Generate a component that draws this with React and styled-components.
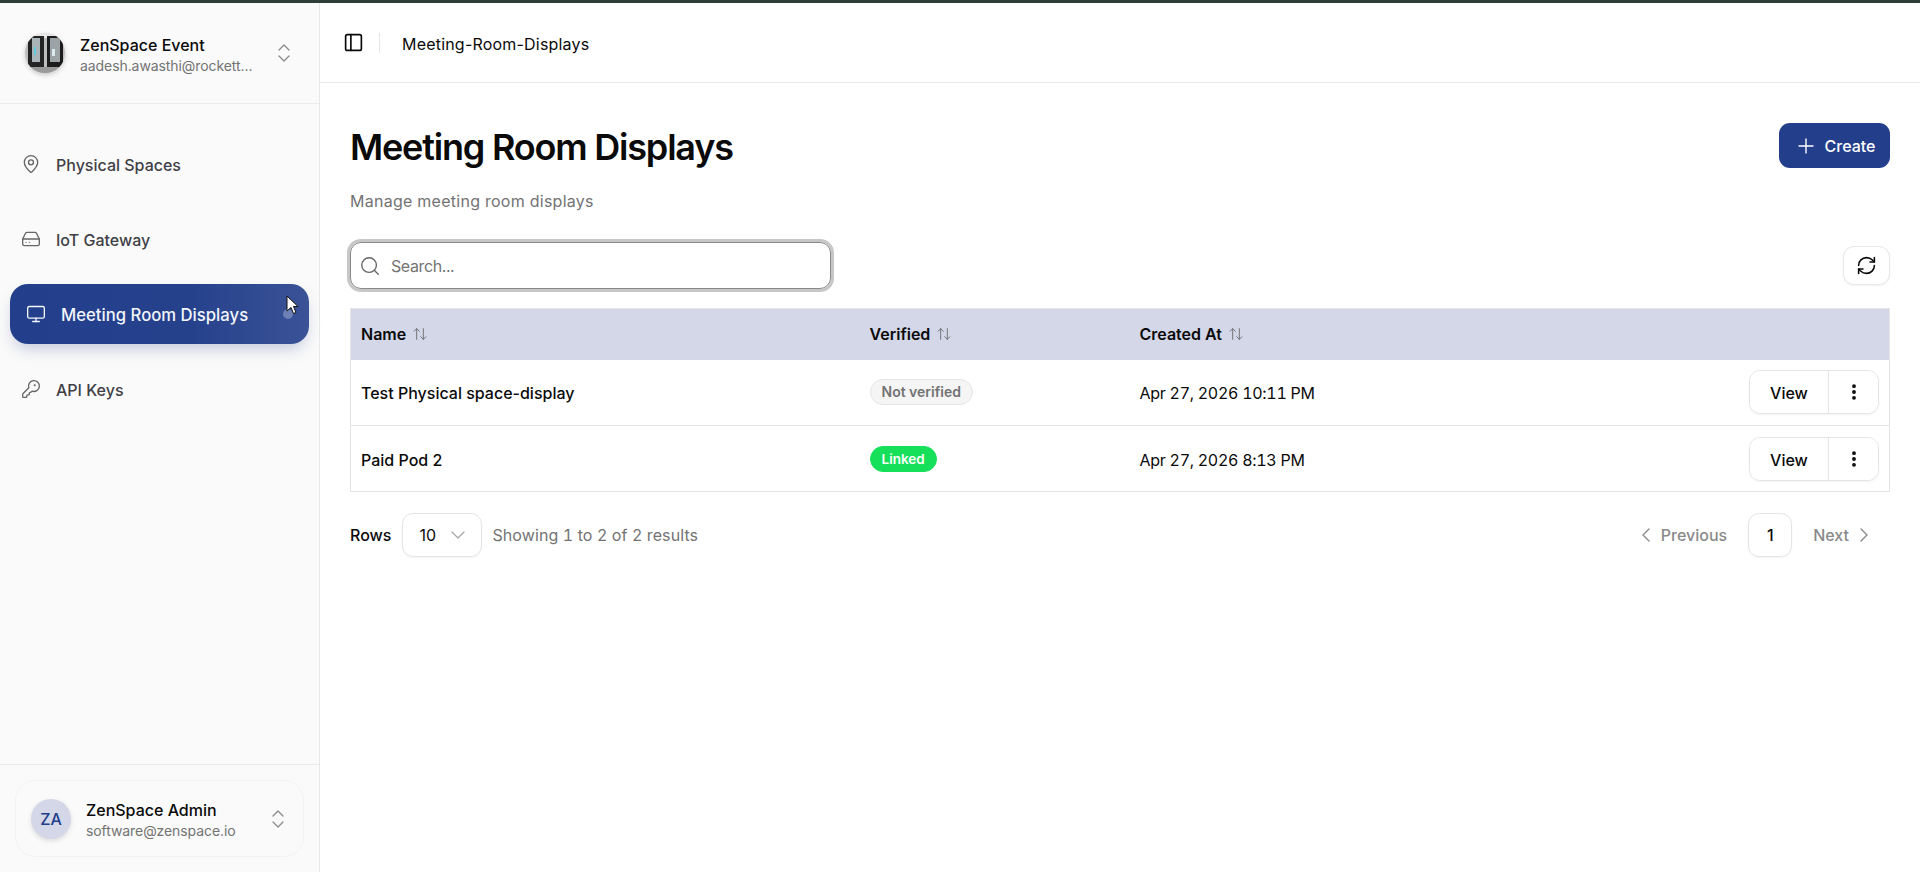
import React from 'react';
import styled, { createGlobalStyle } from 'styled-components';
import {
  ArrowUpDown,
  ChevronDown,
  ChevronLeft,
  ChevronRight,
  ChevronsUpDown,
  EllipsisVertical,
  HardDrive,
  KeyRound,
  MapPin,
  Monitor,
  PanelLeft,
  Plus,
  RefreshCw,
  Search,
} from 'lucide-react';

const GlobalStyle = createGlobalStyle`
  * { box-sizing: border-box; }
  html, body { margin: 0; height: 100%; }
  body {
    font-family: Inter, "Noto Sans", "Liberation Sans", sans-serif;
    color: #0a0a0a;
    background: #fff;
  }
`;

const Shell = styled.div`
  height: 872px;
  display: flex;
  flex-direction: column;
  overflow: hidden;
`;

const TopStrip = styled.div`
  height: 3px;
  background: #2c3d3a;
  flex: none;
`;

const Body = styled.div`
  flex: 1;
  display: flex;
  min-height: 0;
`;

const Sidebar = styled.aside`
  width: 320px;
  flex: none;
  display: flex;
  flex-direction: column;
  background: #fafafa;
  border-right: 1px solid #e8e8e8;
`;

const OrgHeader = styled.div`
  height: 101px;
  flex: none;
  display: flex;
  align-items: center;
  gap: 15px;
  padding: 0 23px 0 25px;
  border-bottom: 1px solid #ececec;
`;

const OrgLogo = styled.svg`
  width: 40px;
  height: 40px;
  flex: none;
  border-radius: 50%;
  box-shadow: 0 2px 5px rgba(0, 0, 0, 0.2);
`;

const UserText = styled.div`
  flex: 1;
  min-width: 0;
  display: flex;
  flex-direction: column;
  padding-top: 3px;
`;

const UserName = styled.div`
  font-size: 16px;
  line-height: 22px;
  font-weight: 500;
  color: #0a0a0a;
`;

const UserMail = styled.div`
  font-size: 14px;
  line-height: 20px;
  color: #737373;
  white-space: nowrap;
  letter-spacing: -0.08px;
`;

const Updown = styled(ChevronsUpDown)`
  width: 24px;
  height: 24px;
  flex: none;
  color: #8a8a8a;
  stroke-width: 1.3;
`;

const Nav = styled.nav`
  flex: 1;
  display: flex;
  flex-direction: column;
  gap: 15px;
  padding: 30px 10px 0;
`;

const NavItem = styled.a`
  position: relative;
  height: 60px;
  display: flex;
  align-items: center;
  gap: 15px;
  padding-left: ${(p) => (p.$active ? '16px' : '11px')};
  border-radius: 18px;
  font-size: ${(p) => (p.$active ? '16.7px' : '16px')};
  font-weight: 500;
  color: ${(p) => (p.$active ? '#f2f5fb' : '#3f3f46')};
  background: ${(p) =>
    p.$active ? 'linear-gradient(90deg, #233e8b 0%, #26418c 60%, #3a5397 100%)' : 'transparent'};
  box-shadow: ${(p) => (p.$active ? '0 8px 16px -4px rgba(35, 62, 139, 0.28)' : 'none')};

  svg {
    width: 20px;
    height: 20px;
    flex: none;
    color: ${(p) => (p.$active ? '#f2f5fb' : '#666')};
    stroke-width: 1.6;
  }
`;

const NavLabel = styled.span`
  padding-top: 2px;
`;

const HoverDot = styled.span`
  position: absolute;
  right: 16px;
  top: 25px;
  width: 10px;
  height: 10px;
  border-radius: 50%;
  background: #6d80b5;
`;

const Pointer = styled.svg`
  position: absolute;
  right: 10px;
  top: 11px;
  width: 13px !important;
  height: 20px !important;
`;

const SidebarFoot = styled.div`
  flex: none;
  height: 108px;
  padding: 15px;
  border-top: 1px solid #ececec;
`;

const UserCard = styled.div`
  height: 77px;
  display: flex;
  align-items: center;
  gap: 15px;
  padding: 0 13px 0 15px;
  border: 1px solid #f3f3f3;
  border-radius: 20px;
`;

const Avatar = styled.div`
  width: 40px;
  height: 40px;
  flex: none;
  border-radius: 50%;
  display: flex;
  align-items: center;
  justify-content: center;
  background: #d3d7e8;
  color: #233e8b;
  font-size: 16px;
  font-weight: 500;
  box-shadow: 0 2px 5px rgba(0, 0, 0, 0.12);
`;

const Main = styled.main`
  flex: 1;
  min-width: 0;
  display: flex;
  flex-direction: column;
`;

const TopBar = styled.header`
  height: 80px;
  flex: none;
  display: flex;
  align-items: center;
  padding-left: 23px;
  border-bottom: 1px solid #e8e8e8;
  font-size: 16px;
  color: #0a0a0a;
`;

const BarDivider = styled.span`
  width: 1px;
  height: 20px;
  margin: 0 22px 0 15px;
  background: #e5e5e5;
`;

const Crumb = styled.span`
  padding-top: 2px;
  letter-spacing: 0.2px;
`;

const Content = styled.div`
  padding: 37px 30px 0 30px;
`;

const HeadRow = styled.div`
  display: flex;
  justify-content: space-between;
  align-items: flex-start;
`;

const Title = styled.h1`
  margin: 3px 0 0;
  font-size: 36px;
  line-height: 48px;
  font-weight: 600;
  letter-spacing: -1.2px;
`;

const Subtitle = styled.p`
  margin: 18px 0 0;
  font-size: 16px;
  line-height: 24px;
  color: #737373;
  letter-spacing: 0.26px;
`;

const CreateButton = styled.button`
  height: 45px;
  width: 111px;
  margin-top: 3px;
  display: flex;
  align-items: center;
  justify-content: center;
  gap: 7px;
  border: 0;
  border-radius: 11px;
  background: #233e8b;
  color: #fff;
  font: 500 16px Inter, sans-serif;
`;

const ToolRow = styled.div`
  margin-top: 29px;
  display: flex;
  justify-content: space-between;
  align-items: center;
`;

const SearchBox = styled.div`
  width: 481px;
  height: 47px;
  display: flex;
  align-items: center;
  gap: 10px;
  padding: 0 8px;
  border: 1px solid #8a8a8a;
  border-radius: 11px;
  box-shadow: 0 0 0 3px #c7c7c7;
  font-size: 16px;
  color: #737373;
  letter-spacing: -0.4px;
`;

const IconSquare = styled.button`
  width: 47px;
  height: 39px;
  display: flex;
  align-items: center;
  justify-content: center;
  background: #fff;
  border: 1px solid #e8e8e8;
  border-radius: 11px;
  box-shadow: 0 1px 2px rgba(0, 0, 0, 0.05);
  color: #0a0a0a;
`;

const Table = styled.table`
  width: 1540px;
  margin: 19px 0 0;
  border-collapse: collapse;
  table-layout: fixed;
  font-size: 16px;
  border: 1px solid #e5e5e5;
`;

const Th = styled.th`
  height: 51px;
  padding: 0 10px;
  text-align: left;
  background: #d3d7e8;
  font-weight: 600;
  font-size: 16px;
`;

const SortWrap = styled.span`
  display: inline-flex;
  align-items: center;
  gap: 6px;

  svg {
    width: 16px;
    height: 16px;
    color: #666;
    stroke-width: 1.3;
  }
`;

const Td = styled.td`
  height: 66px;
  padding: ${(p) => (p.$text ? '2px 10px 0' : '0 10px')};
  border-bottom: 1px solid #e5e5e5;
  font-weight: ${(p) => (p.$strong ? 500 : 400)};
  text-align: ${(p) => (p.$right ? 'right' : 'left')};
`;

const DateText = styled.span`
  font-variant-numeric: tabular-nums;
  letter-spacing: -0.28px;
`;

const Badge = styled.span`
  display: inline-block;
  padding: 0 11px;
  height: 26px;
  line-height: 24px;
  border-radius: 13px;
  font-size: ${(p) => (p.$linked ? '13.5px' : '14px')};
  font-weight: 600;
  border: 1px solid ${(p) => (p.$linked ? '#16e05a' : '#e5e5e5')};
  background: ${(p) => (p.$linked ? '#16e05a' : '#f5f5f5')};
  color: ${(p) => (p.$linked ? '#fff' : '#737373')};
`;

const ActionGroup = styled.div`
  display: inline-flex;
  height: 44px;
  border: 1px solid #e5e5e5;
  border-radius: 11px;
  box-shadow: 0 1px 2px rgba(0, 0, 0, 0.05);
  overflow: hidden;
  vertical-align: middle;
`;

const ActionButton = styled.button`
  width: ${(p) => (p.$icon ? '50px' : '78px')};
  padding: ${(p) => (p.$icon ? '0' : '2px 0 0')};
  border: 0;
  border-left: ${(p) => (p.$icon ? '1px solid #e5e5e5' : '0')};
  background: #fff;
  display: flex;
  align-items: center;
  justify-content: center;
  color: #0a0a0a;
  font: 500 16px Inter, sans-serif;
`;

const Pager = styled.div`
  margin-top: 21px;
  height: 44px;
  display: flex;
  align-items: center;
  justify-content: space-between;
`;

const PagerSide = styled.div`
  display: flex;
  align-items: center;
  padding-right: ${(p) => (p.$end ? '14px' : '0')};
`;

const RowsLabel = styled.span`
  font-size: 16px;
  font-weight: 500;
`;

const RowsSelect = styled.div`
  width: 80px;
  height: 44px;
  margin: 0 10px 0 11px;
  padding: 0 11px 0 16px;
  display: flex;
  align-items: center;
  justify-content: space-between;
  border: 1px solid #e5e5e5;
  border-radius: 11px;
  box-shadow: 0 1px 2px rgba(0, 0, 0, 0.05);
  font-size: 16px;

  svg {
    width: 24px;
    height: 24px;
    color: #a3a3a3;
    stroke-width: 1.2;
  }
`;

const Summary = styled.span`
  font-size: 16px;
  color: #737373;
  font-variant-numeric: tabular-nums;
  letter-spacing: 0.1px;
`;

const PageLink = styled.span`
  display: flex;
  align-items: center;
  gap: 3px;
  color: #8a8a8a;
  font-size: 16px;
  font-weight: 500;

  svg {
    width: 24px;
    height: 24px;
    stroke-width: 1.4;
  }
`;

const PageNumber = styled.div`
  width: 44px;
  height: 44px;
  margin: 0 21px;
  display: flex;
  align-items: center;
  justify-content: center;
  border: 1px solid #e5e5e5;
  border-radius: 11px;
  box-shadow: 0 1px 2px rgba(0, 0, 0, 0.05);
  font-size: 16px;
  font-weight: 500;
`;

const rows = [
  { name: 'Test Physical space-display', linked: false, created: 'Apr 27, 2026 10:11 PM' },
  { name: 'Paid Pod 2', linked: true, created: 'Apr 27, 2026 8:13 PM' },
];

function SortHead({ children }) {
  return (
    <SortWrap>
      {children}
      <ArrowUpDown />
    </SortWrap>
  );
}

function Logo() {
  return (
    <OrgLogo viewBox="0 0 40 40">
      <rect width="40" height="40" fill="#bdbdbd" />
      <rect width="40" height="5" fill="#e8e8e8" />
      <rect x="3" y="3" width="16" height="31" fill="#242424" />
      <rect x="22" y="3" width="16" height="31" fill="#1c1c1c" />
      <rect x="7" y="5" width="8" height="24" fill="#aab3b6" />
      <rect x="25" y="5" width="10" height="24" fill="#9ca3a6" />
      <rect x="9" y="14" width="2" height="8" fill="#5fc9df" />
      <rect x="27" y="16" width="3" height="7" fill="#dce9ee" />
      <path d="M0 34h40v6H0z" fill="#9a9a9a" />
    </OrgLogo>
  );
}

export default function App() {
  return (
    <>
      <GlobalStyle />
      <Shell>
        <TopStrip />
        <Body>
          <Sidebar>
            <OrgHeader>
              <Logo />
              <UserText>
                <UserName>ZenSpace Event</UserName>
                <UserMail>aadesh.awasthi@rockett...</UserMail>
              </UserText>
              <Updown />
            </OrgHeader>
            <Nav>
              <NavItem>
                <MapPin />
                <NavLabel>Physical Spaces</NavLabel>
              </NavItem>
              <NavItem>
                <HardDrive />
                <NavLabel>IoT Gateway</NavLabel>
              </NavItem>
              <NavItem $active>
                <Monitor />
                <NavLabel>Meeting Room Displays</NavLabel>
                <HoverDot />
                <Pointer viewBox="0 0 13 20">
                  <path d="M1 1v15l4-3.5 2.5 6 2.5-1-2.5-6H12z" fill="#fff" stroke="#111" strokeWidth="1" />
                </Pointer>
              </NavItem>
              <NavItem>
                <KeyRound />
                <NavLabel>API Keys</NavLabel>
              </NavItem>
            </Nav>
            <SidebarFoot>
              <UserCard>
                <Avatar>ZA</Avatar>
                <UserText>
                  <UserName>ZenSpace Admin</UserName>
                  <UserMail>software@zenspace.io</UserMail>
                </UserText>
                <Updown />
              </UserCard>
            </SidebarFoot>
          </Sidebar>
          <Main>
            <TopBar>
              <PanelLeft size={21} strokeWidth={1.9} />
              <BarDivider />
              <Crumb>Meeting-Room-Displays</Crumb>
            </TopBar>
            <Content>
              <HeadRow>
                <div>
                  <Title>Meeting Room Displays</Title>
                  <Subtitle>Manage meeting room displays</Subtitle>
                </div>
                <CreateButton>
                  <Plus size={24} strokeWidth={1.4} />
                  Create
                </CreateButton>
              </HeadRow>
              <ToolRow>
                <SearchBox>
                  <Search size={22} color="#666" strokeWidth={1.5} />
                  Search...
                </SearchBox>
                <IconSquare>
                  <RefreshCw size={21} strokeWidth={1.8} />
                </IconSquare>
              </ToolRow>
              <Table>
                <colgroup>
                  <col style={{ width: 509 }} />
                  <col style={{ width: 270 }} />
                  <col style={{ width: 400 }} />
                  <col />
                </colgroup>
                <thead>
                  <tr>
                    <Th><SortHead>Name</SortHead></Th>
                    <Th><SortHead>Verified</SortHead></Th>
                    <Th><SortHead>Created At</SortHead></Th>
                    <Th />
                  </tr>
                </thead>
                <tbody>
                  {rows.map((row) => (
                    <tr key={row.name}>
                      <Td $strong $text>{row.name}</Td>
                      <Td>
                        <Badge $linked={row.linked}>{row.linked ? 'Linked' : 'Not verified'}</Badge>
                      </Td>
                      <Td $text><DateText>{row.created}</DateText></Td>
                      <Td $right>
                        <ActionGroup>
                          <ActionButton>View</ActionButton>
                          <ActionButton $icon>
                            <EllipsisVertical size={20} strokeWidth={2.6} />
                          </ActionButton>
                        </ActionGroup>
                      </Td>
                    </tr>
                  ))}
                </tbody>
              </Table>
              <Pager>
                <PagerSide>
                  <RowsLabel>Rows</RowsLabel>
                  <RowsSelect>
                    10
                    <ChevronDown />
                  </RowsSelect>
                  <Summary>Showing 1 to 2 of 2 results</Summary>
                </PagerSide>
                <PagerSide $end>
                  <PageLink>
                    <ChevronLeft />
                    Previous
                  </PageLink>
                  <PageNumber>1</PageNumber>
                  <PageLink>
                    Next
                    <ChevronRight />
                  </PageLink>
                </PagerSide>
              </Pager>
            </Content>
          </Main>
        </Body>
      </Shell>
    </>
  );
}
